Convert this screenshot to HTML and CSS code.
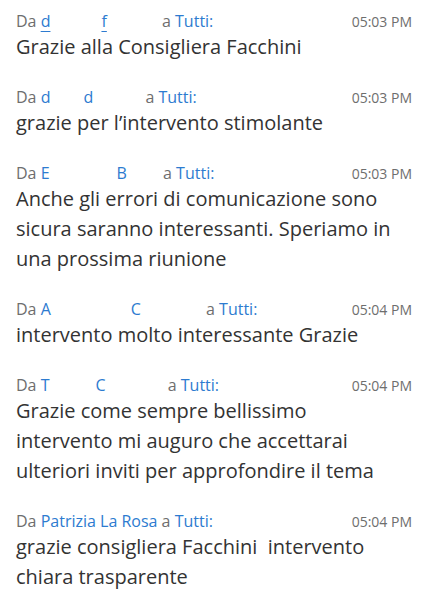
FILE: index.html
```html
<!DOCTYPE html>
<html lang="it">
<head>
<meta charset="utf-8">
<title>Chat</title>
<link rel="stylesheet" href="styles.css">
</head>
<body>
<div class="chat">
  <div class="msg">
    <div class="head">
      <span class="from">Da <span class="name"><span class="under">d<i class="gap g51"></i>f</span><i class="gap g51"></i></span> a <span class="to">Tutti:</span></span>
      <span class="time">05:03 PM</span>
    </div>
    <div class="text">Grazie alla Consigliera Facchini</div>
  </div>
  <div class="msg">
    <div class="head">
      <span class="from">Da <span class="name">d<i class="gap g33"></i>d<i class="gap g48"></i></span> a <span class="to">Tutti:</span></span>
      <span class="time">05:03 PM</span>
    </div>
    <div class="text">grazie per l’intervento stimolante</div>
  </div>
  <div class="msg">
    <div class="head">
      <span class="from">Da <span class="name">E<i class="gap g67"></i>B<i class="gap g32"></i></span> a <span class="to">Tutti:</span></span>
      <span class="time">05:03 PM</span>
    </div>
    <div class="text">Anche gli errori di comunicazione sono<br>sicura saranno interessanti. Speriamo in<br>una prossima riunione</div>
  </div>
  <div class="msg">
    <div class="head">
      <span class="from">Da <span class="name">A<i class="gap g80"></i>C<i class="gap g61"></i></span> a <span class="to">Tutti:</span></span>
      <span class="time">05:04 PM</span>
    </div>
    <div class="text">intervento molto interessante Grazie</div>
  </div>
  <div class="msg">
    <div class="head">
      <span class="from">Da <span class="name">T<i class="gap g46"></i>C<i class="gap g58"></i></span> a <span class="to">Tutti:</span></span>
      <span class="time">05:04 PM</span>
    </div>
    <div class="text">Grazie come sempre bellissimo<br>intervento mi auguro che accettarai<br>ulteriori inviti per approfondire il tema</div>
  </div>
  <div class="msg">
    <div class="head">
      <span class="from">Da <span class="name">Patrizia La Rosa</span> a <span class="to">Tutti:</span></span>
      <span class="time">05:04 PM</span>
    </div>
    <div class="text">grazie consigliera Facchini&nbsp; intervento<br>chiara trasparente</div>
  </div>
</div>
</body>
</html>
```

FILE: styles.css
```css
* { box-sizing: border-box; }
html, body {
  margin: 0;
  padding: 0;
  background: #ffffff;
}
body {
  font-family: "Open Sans", "Noto Sans", sans-serif;
}
.chat {
  display: flex;
  flex-direction: column;
  gap: 25px;
  padding: 11px 20px 0 16px;
}
.msg {
  display: flex;
  flex-direction: column;
}
.head {
  display: flex;
  justify-content: space-between;
  align-items: baseline;
  font-size: 16px;
  line-height: 20px;
  color: #6e6e6e;
  padding-right: 10px;
}
.from { white-space: nowrap; }
.name, .to { color: #2d7bd0; }
.under {
  text-decoration: underline;
  text-underline-offset: 4px;
  text-decoration-thickness: 1px;
}
.gap { display: inline-block; }
.g32 { width: 32px; }
.g33 { width: 33px; }
.g46 { width: 46px; }
.g48 { width: 48px; }
.g51 { width: 51px; }
.g58 { width: 58px; }
.g61 { width: 61px; }
.g67 { width: 67px; }
.g80 { width: 80px; }
.time {
  font-size: 14px;
  color: #6e6e6e;
}
.text {
  font-size: 20px;
  line-height: 30px;
  color: #333333;
}
```
